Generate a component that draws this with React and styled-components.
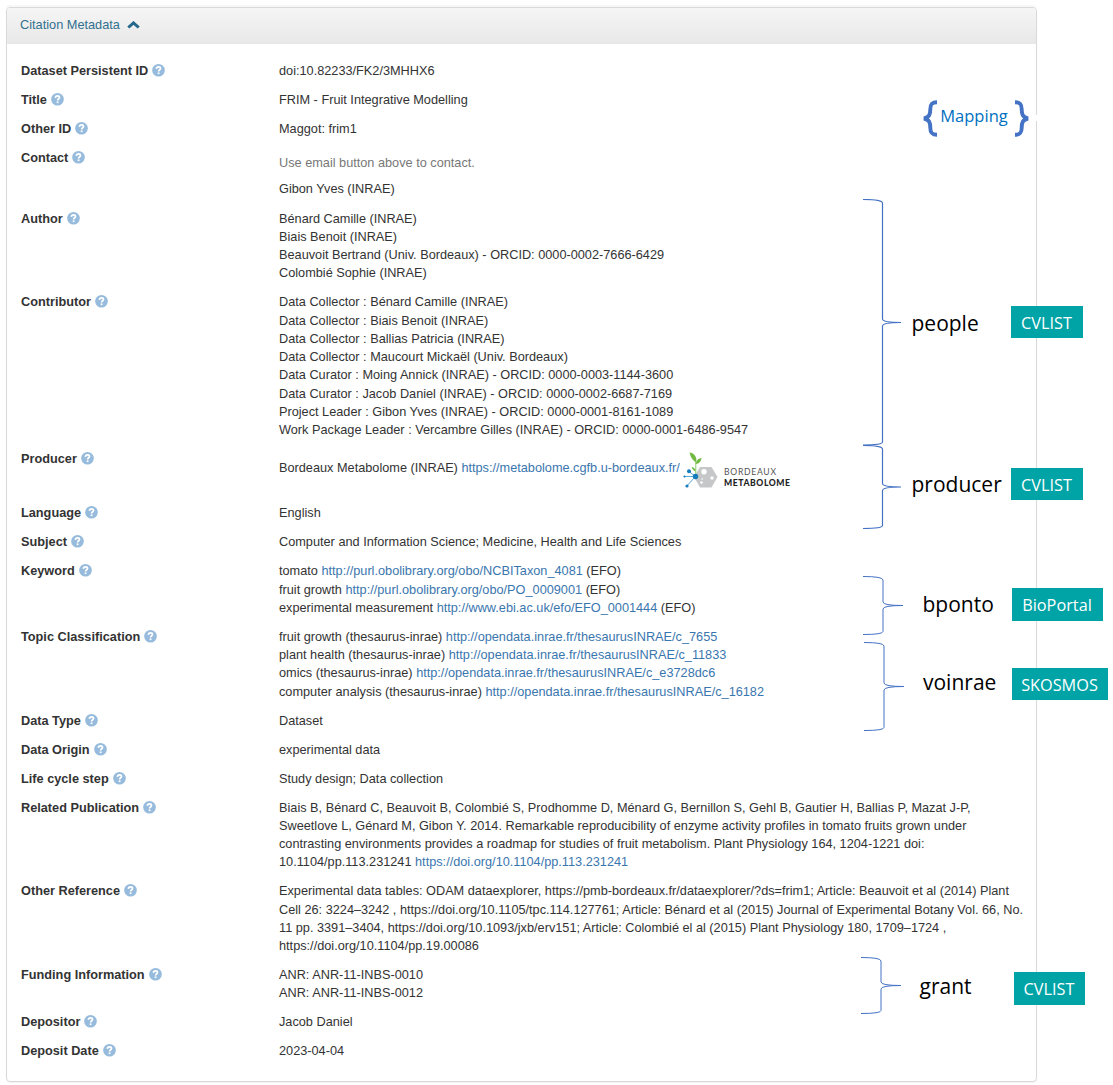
import React from 'react';
import styled, { createGlobalStyle } from 'styled-components';

const Global = createGlobalStyle`
  * { box-sizing: border-box; }
  body { margin: 0; background: #fff; font-family: "Liberation Sans", Arial, sans-serif; }
`;

const Page = styled.main`
  position: relative;
  width: 1113px;
  height: 1085px;
  overflow: hidden;
  padding: 7px 0 0 6px;
`;

const Panel = styled.section`
  width: 1031px;
  height: 1075px;
  border: 1px solid #d9d9d9;
  border-radius: 4px;
  box-shadow: 0 1px 1px rgba(0, 0, 0, 0.05), 0 -2px 0 #f7f7f7;
`;

const PanelHeader = styled.header`
  display: flex;
  align-items: center;
  gap: 7px;
  height: 36px;
  padding: 0 13px 3px;
  border-radius: 3px 3px 0 0;
  background: linear-gradient(#f5f5f5, #e8e8e8);
  color: #31708f;
  font-size: 12.75px;
`;

const Fields = styled.dl`
  display: flex;
  flex-direction: column;
  gap: 10.76px;
  margin: 0;
  padding: 18.1px 0 0 14px;
  color: #333;
  font-size: 12.735px;
  line-height: 18.25px;
`;

const Field = styled.div`
  display: grid;
  grid-template-columns: 258px 1fr;
  height: ${(p) => (p.$height ? `${p.$height}px` : 'auto')};
`;

const Name = styled.dt`
  display: flex;
  gap: 4px;
  font-weight: bold;
  white-space: nowrap;
  svg { margin-top: 2px; }
`;

const Value = styled.dd`
  margin: 0;
  padding-top: ${(p) => p.$top || 0}px;
  white-space: nowrap;
`;

const Line = styled.div``;

const Hint = styled.p`
  margin: 0 0 7.8px;
  color: #777;
`;

const Link = styled.a`
  color: #3a76ae;
`;

const ProducerLine = styled.div`
  display: flex;
  align-items: flex-start;
  gap: 5px;
  white-space: pre;
  svg { margin-top: -6px; overflow: visible; }
`;

const Annotation = styled.div`
  position: absolute;
  left: ${(p) => p.$x}px;
  top: ${(p) => p.$y}px;
`;

const Term = styled(Annotation)`
  color: #000;
  font: 21px/30px "Open Sans", "Noto Sans", sans-serif;
`;

const Tag = styled(Annotation)`
  display: flex;
  align-items: center;
  justify-content: center;
  width: ${(p) => p.$w}px;
  height: ${(p) => p.$h}px;
  padding-top: ${(p) => (p.$h > 32 ? 0 : 2)}px;
  padding-right: 1px;
  background: #00a3a6;
  color: #fff;
  font: 16.3px/20px "Open Sans", "Noto Sans", sans-serif;
`;

const Mapping = styled(Annotation)`
  display: flex;
  align-items: center;
  justify-content: space-between;
  width: 106px;
  height: 38px;
  color: #0070c0;
  font: 16.5px/20px "Open Sans", "Noto Sans", sans-serif;
`;

const MappingText = styled.span`
  margin: -4px 4px 0 0;
`;

const BorderGap = styled(Annotation)`
  width: 5px;
  height: 6px;
  background: #fff;
`;

const Help = () => (
  <svg width="13" height="13" viewBox="0 0 13 13">
    <circle cx="6.5" cy="6.3" r="6.3" fill="#97bbdc" />
    <path d="M4.4 4.9C4.5 3.5 5.3 2.9 6.5 2.9C7.7 2.9 8.5 3.6 8.5 4.5C8.5 5.7 6.6 5.8 6.6 7.4" fill="none" stroke="#fff" strokeWidth="1.7" />
    <rect x="5.7" y="8.4" width="1.8" height="1.7" fill="#fff" />
  </svg>
);

const Chevron = () => (
  <svg width="13" height="8" viewBox="0 0 13 8">
    <path d="M1.3 6.5L6.5 1.9L11.7 6.5" fill="none" stroke="#24678d" strokeWidth="3" />
  </svg>
);

const Logo = () => (
  <svg width="112" height="38" viewBox="0 0 112 38">
    <path d="M15 14H26.5L32.5 24L26.5 34.5H15L9 24Z" fill="#c5c7c9" />
    <g stroke="#58a9d8" strokeWidth="1" fill="none">
      <path d="M10.5 23.5L4 18.5M10.5 23.5H-1M10.5 23.5L1.8 33" />
      <path d="M10.8 23L10.8 9" stroke="#8aca68" />
    </g>
    <g fill="#147bbd">
      <circle cx="10.5" cy="23.5" r="2.7" />
      <circle cx="4" cy="18.3" r="2" />
      <circle cx="-0.5" cy="23.5" r="1.1" />
      <circle cx="2" cy="33" r="1.6" />
    </g>
    <g fill="#72b943">
      <path d="M4.5 -0.5C9.5 0 12 4 11.3 9.5C7.5 7.5 5.5 4 4.5 -0.5Z" />
      <path d="M10.8 11C11.3 7.5 12.8 5.5 16.5 5C16 9 14 10.5 10.8 11Z" />
      <path d="M6.5 14C9.5 14.5 10.5 16 10.5 18.5C8.5 17.5 7.5 16 6.5 14Z" />
    </g>
    <g fill="#fff">
      <circle cx="19" cy="18.8" r="2.7" />
      <circle cx="27" cy="25" r="1.7" />
      <circle cx="16.5" cy="29.5" r="1.3" />
      <circle cx="17.2" cy="26" r="0.8" />
    </g>
    <g fontFamily="Lato, sans-serif" fontSize="8.6">
      <text x="39" y="22" fill="#555" textLength="52">BORDEAUX</text>
      <text x="39" y="33" fill="#222" fontWeight="900" textLength="66">METABOLOME</text>
    </g>
  </svg>
);

const BoldBrace = ({ flip }) => (
  <svg width="15" height="37" viewBox="0 0 15 37">
    <path
      d="M14 2.2C8.5 2.2 7.3 4.5 7.3 9.2C7.3 14.5 6.5 17.2 1 18.5C6.5 19.8 7.3 22.5 7.3 27.8C7.3 32.5 8.5 34.8 14 34.8"
      transform={flip ? 'matrix(-1 0 0 1 15 0)' : undefined}
      fill="none" stroke="#4472c4" strokeWidth="3.9"
    />
  </svg>
);

const braces = [
  { x: 863, y: 199, w: 38, h: 246, mid: 123.5, stem: 19.5, width: 1.2 },
  { x: 863, y: 445, w: 38, h: 83.5, mid: 42, stem: 19.5, width: 1.2 },
  { x: 863, y: 576, w: 40, h: 58.5, mid: 29.5, stem: 20, width: 1 },
  { x: 864, y: 642, w: 40, h: 88.5, mid: 44.5, stem: 20, width: 1 },
  { x: 861, y: 957, w: 40, h: 56.5, mid: 28.5, stem: 20, width: 1 },
];

const Brace = ({ h, w, mid, stem, width }) => (
  <svg width={w} height={h + 1} viewBox={`0 0 ${w} ${h + 1}`} display="block">
    <path
      d={`M0 .5Q${stem} .5 ${stem} 4V${mid - 3.5}Q${stem} ${mid} ${w} ${mid}Q${stem} ${mid} ${stem} ${mid + 3.5}V${h - 3}Q${stem} ${h} 0 ${h}`}
      fill="none" stroke="#4472c4" strokeWidth={width}
    />
  </svg>
);

const terms = [
  ['people', 911.5, 308], ['producer', 911.5, 469], ['bponto', 922.5, 589],
  ['voinrae', 923, 667], ['grant', 919.5, 971],
];

const tags = [
  ['CVLIST', 1011, 306, 72, 32], ['CVLIST', 1011, 468, 72, 32],
  ['BioPortal', 1012, 588, 91, 33], ['SKOSMOS', 1012, 668, 96, 32],
  ['CVLIST', 1014, 972, 71, 33],
];

const fields = [
  { name: 'Dataset Persistent ID', lines: ['doi:10.82233/FK2/3MHHX6'] },
  { name: 'Title', lines: ['FRIM - Fruit Integrative Modelling'] },
  { name: 'Other ID', lines: ['Maggot: frim1'] },
  { name: 'Contact', height: 49.9, top: 5.3, hint: 'Use email button above to contact.', lines: ['Gibon Yves (INRAE)'] },
  { name: 'Author', lines: [
    'Bénard Camille (INRAE)', 'Biais Benoit (INRAE)',
    'Beauvoit Bertrand (Univ. Bordeaux) - ORCID: 0000-0002-7666-6429', 'Colombié Sophie (INRAE)',
  ] },
  { name: 'Contributor', lines: [
    'Data Collector : Bénard Camille (INRAE)', 'Data Collector : Biais Benoit (INRAE)',
    'Data Collector : Ballias Patricia (INRAE)', 'Data Collector : Maucourt Mickaël (Univ. Bordeaux)',
    'Data Curator : Moing Annick (INRAE) - ORCID: 0000-0003-1144-3600',
    'Data Curator : Jacob Daniel (INRAE) - ORCID: 0000-0002-6687-7169',
    'Project Leader : Gibon Yves (INRAE) - ORCID: 0000-0001-8161-1089',
    'Work Package Leader : Vercambre Gilles (INRAE) - ORCID: 0000-0001-6486-9547',
  ] },
  { name: 'Producer', height: 43.5, top: 9, logo: true, lines: [['Bordeaux Metabolome (INRAE) ', 'https://metabolome.cgfb.u-bordeaux.fr/']] },
  { name: 'Language', lines: ['English'] },
  { name: 'Subject', lines: ['Computer and Information Science; Medicine, Health and Life Sciences'] },
  { name: 'Keyword', lines: [
    ['tomato ', 'http://purl.obolibrary.org/obo/NCBITaxon_4081', ' (EFO)'],
    ['fruit growth ', 'http://purl.obolibrary.org/obo/PO_0009001', ' (EFO)'],
    ['experimental measurement ', 'http://www.ebi.ac.uk/efo/EFO_0001444', ' (EFO)'],
  ] },
  { name: 'Topic Classification', lines: [
    ['fruit growth (thesaurus-inrae) ', 'http://opendata.inrae.fr/thesaurusINRAE/c_7655'],
    ['plant health (thesaurus-inrae) ', 'http://opendata.inrae.fr/thesaurusINRAE/c_11833'],
    ['omics (thesaurus-inrae) ', 'http://opendata.inrae.fr/thesaurusINRAE/c_e3728dc6'],
    ['computer analysis (thesaurus-inrae) ', 'http://opendata.inrae.fr/thesaurusINRAE/c_16182'],
  ] },
  { name: 'Data Type', lines: ['Dataset'] },
  { name: 'Data Origin', lines: ['experimental data'] },
  { name: 'Life cycle step', lines: ['Study design; Data collection'] },
  { name: 'Related Publication', lines: [
    'Biais B, Bénard C, Beauvoit B, Colombié S, Prodhomme D, Ménard G, Bernillon S, Gehl B, Gautier H, Ballias P, Mazat J-P,',
    'Sweetlove L, Génard M, Gibon Y. 2014. Remarkable reproducibility of enzyme activity profiles in tomato fruits grown under',
    'contrasting environments provides a roadmap for studies of fruit metabolism. Plant Physiology 164, 1204-1221 doi:',
    ['10.1104/pp.113.231241 ', 'https://doi.org/10.1104/pp.113.231241'],
  ] },
  { name: 'Other Reference', lines: [
    'Experimental data tables: ODAM dataexplorer, https://pmb-bordeaux.fr/dataexplorer/?ds=frim1; Article: Beauvoit et al (2014) Plant',
    'Cell 26: 3224–3242 , https://doi.org/10.1105/tpc.114.127761; Article: Bénard et al (2015) Journal of Experimental Botany Vol. 66, No.',
    '11 pp. 3391–3404, https://doi.org/10.1093/jxb/erv151; Article: Colombié el al (2015) Plant Physiology 180, 1709–1724 ,',
    'https://doi.org/10.1104/pp.19.00086',
  ] },
  { name: 'Funding Information', lines: ['ANR: ANR-11-INBS-0010', 'ANR: ANR-11-INBS-0012'] },
  { name: 'Depositor', lines: ['Jacob Daniel'] },
  { name: 'Deposit Date', lines: ['2023-04-04'] },
];

const LineText = ({ line }) =>
  Array.isArray(line) ? <>{line[0]}<Link>{line[1]}</Link>{line[2]}</> : line;

export default function App() {
  return (
    <Page>
      <Global />
      <Panel>
        <PanelHeader>Citation Metadata <Chevron /></PanelHeader>
        <Fields>
          {fields.map((f) => (
            <Field key={f.name} $height={f.height}>
              <Name>{f.name}<Help /></Name>
              <Value $top={f.top}>
                {f.hint && <Hint>{f.hint}</Hint>}
                {f.lines.map((line, i) => f.logo
                  ? <ProducerLine key={i}><span><LineText line={line} /></span><Logo /></ProducerLine>
                  : <Line key={i}><LineText line={line} /></Line>)}
              </Value>
            </Field>
          ))}
        </Fields>
      </Panel>
      <BorderGap $x={1034} $y={115} />
      <Mapping $x={923} $y={99}><BoldBrace /><MappingText>Mapping</MappingText><BoldBrace flip /></Mapping>
      {braces.map((b) => <Annotation key={b.y} $x={b.x} $y={b.y}><Brace {...b} /></Annotation>)}
      {terms.map(([text, x, y]) => <Term key={text} $x={x} $y={y}>{text}</Term>)}
      {tags.map(([text, x, y, w, h]) => <Tag key={y} $x={x} $y={y} $w={w} $h={h}>{text}</Tag>)}
    </Page>
  );
}
